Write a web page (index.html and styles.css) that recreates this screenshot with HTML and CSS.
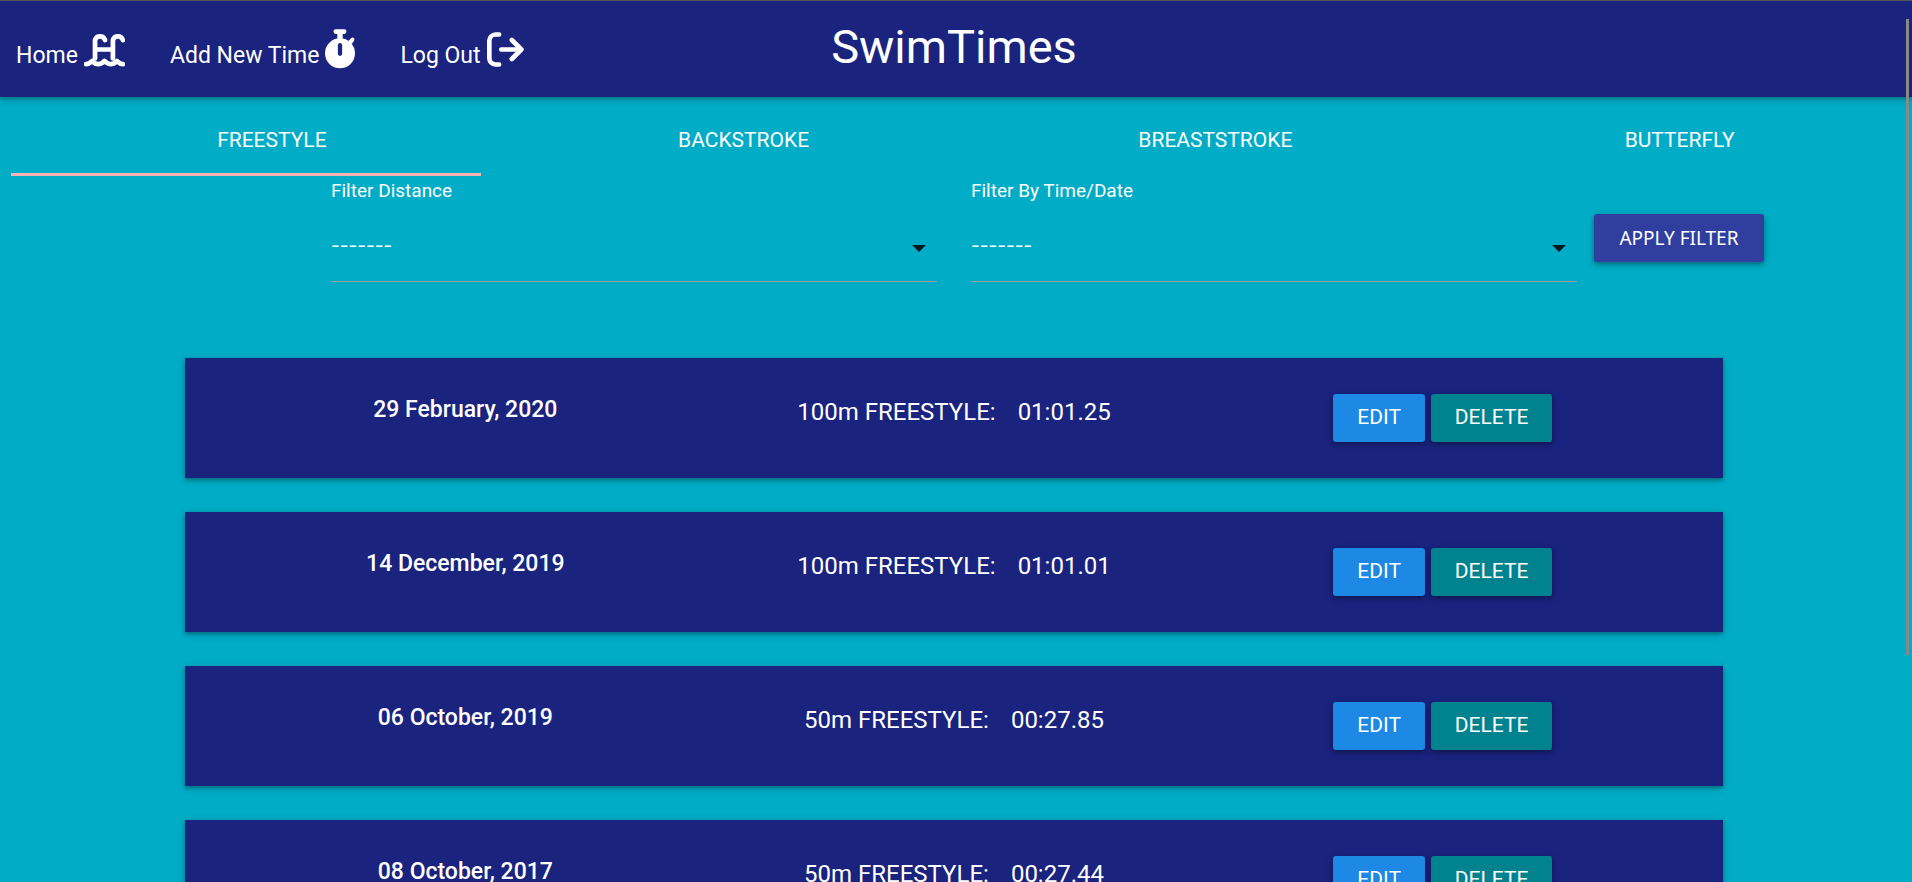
FILE: index.html
```html
<!DOCTYPE html>
<html lang="en">
<head>
<meta charset="utf-8">
<title>SwimTimes</title>
<meta name="viewport" content="width=device-width, initial-scale=1">
<link rel="stylesheet" href="styles.css">
</head>
<body>
<header class="navbar">
  <nav class="nav-links" aria-label="Main">
    <a href="#home">Home
      <svg class="icon icon-pool" viewBox="0 0 39 33" aria-hidden="true"><g fill="none" stroke="#fff" stroke-width="4.500" stroke-linecap="round" stroke-linejoin="round"><path d="M10.500 25V7.500a5 5 0 0 1 9.500 0M27.500 25V7.500a5 5 0 0 1 9.500 0M11 16.500h16"/><path d="M2 30.500c3 0 4-1.500 5.700-3 2.500 2.500 4 3 6 3s3.600-1 5.800-3c2.300 2 3.800 3 5.800 3s3.500-.5 6-3c1.700 1.500 2.700 3 5.700 3"/></g></svg>
    </a>
    <a href="#add">Add New Time
      <svg class="icon icon-watch" viewBox="0 0 28 37" aria-hidden="true"><g fill="#fff"><rect x="8" y="0" width="12" height="4.500" rx="2"/><rect x="11.500" y="2" width="5" height="7"/><circle cx="14" cy="22.500" r="14"/><path d="M21 12l3.500-3.800q1.200-1 2.400.2 1 1.200.2 2.500L24 15z"/></g><path d="M14 15v8" stroke="#1a237e" stroke-width="4" stroke-linecap="round"/></svg>
    </a>
    <a href="#logout">Log Out
      <svg class="icon icon-exit" viewBox="0 0 35 33" aria-hidden="true"><g fill="none" stroke="#fff" stroke-width="4.400" stroke-linecap="round" stroke-linejoin="round"><path d="M11.500 2.300H8A6 6 0 0 0 2.200 8v17A6 6 0 0 0 8 30.700h3.500M13.500 16.500h18M23.500 7.500l9 9-9 9"/></g></svg>
    </a>
  </nav>
  <h1 class="brand">SwimTimes</h1>
</header>

<nav class="tabs" aria-label="Strokes">
  <a class="active" href="#freestyle">FREESTYLE</a>
  <a href="#backstroke">BACKSTROKE</a>
  <a href="#breaststroke">BREASTSTROKE</a>
  <a href="#butterfly">BUTTERFLY</a>
  <span class="indicator"></span>
</nav>

<main>
  <form class="filters">
    <div class="field">
      <label for="distance">Filter Distance</label>
      <div class="select"><select id="distance"><option>-------</option></select></div>
    </div>
    <div class="field">
      <label for="order">Filter By Time/Date</label>
      <div class="select"><select id="order"><option>-------</option></select></div>
    </div>
    <button class="btn apply" type="button">APPLY FILTER</button>
  </form>

  <section class="times" aria-label="Freestyle times">
    <article class="card">
      <h2>29 February, 2020</h2>
      <p><span>100m FREESTYLE:</span><span>01:01.25</span></p>
      <div class="actions"><button class="btn edit" type="button">EDIT</button><button class="btn delete" type="button">DELETE</button></div>
    </article>
    <article class="card">
      <h2>14 December, 2019</h2>
      <p><span>100m FREESTYLE:</span><span>01:01.01</span></p>
      <div class="actions"><button class="btn edit" type="button">EDIT</button><button class="btn delete" type="button">DELETE</button></div>
    </article>
    <article class="card">
      <h2>06 October, 2019</h2>
      <p><span>50m FREESTYLE:</span><span>00:27.85</span></p>
      <div class="actions"><button class="btn edit" type="button">EDIT</button><button class="btn delete" type="button">DELETE</button></div>
    </article>
    <article class="card">
      <h2>08 October, 2017</h2>
      <p><span>50m FREESTYLE:</span><span>00:27.44</span></p>
      <div class="actions"><button class="btn edit" type="button">EDIT</button><button class="btn delete" type="button">DELETE</button></div>
    </article>
  </section>
</main>
<div class="scroll-thumb" aria-hidden="true"></div>
</body>
</html>
```

FILE: styles.css
```css
* { box-sizing: border-box; }

html { scrollbar-width: none; }

body {
  margin: 0;
  background: #00acc6;
  color: #fff;
  font-family: Roboto, "Open Sans", sans-serif;
}

a { color: inherit; text-decoration: none; }

.navbar {
  display: grid;
  grid-template-columns: 1fr auto 1fr;
  height: 97px;
  padding: 0 20px 0 16px;
  border-top: 1px solid #555;
  background: #1a237e;
  box-shadow: 0 2px 4px 0 rgba(0, 0, 0, 0.26), 0 2px 8px 0 rgba(0, 0, 0, 0.14);
}

.nav-links {
  display: flex;
  gap: 45px;
  align-items: flex-start;
  padding-top: 30px;
  font-size: 23px;
  line-height: 32px;
}

.nav-links a {
  display: flex;
  gap: 6px;
  align-items: flex-end;
  height: 41px;
  white-space: nowrap;
}

.icon { display: block; height: 35px; margin-bottom: 5px; }
.icon-pool { width: 41px; }
.icon-watch { width: 30px; height: 40px; margin-bottom: 3px; }
.icon-exit { width: 37px; }

.brand {
  margin: 0;
  padding-top: 16px;
  font-size: 47px;
  font-weight: 400;
  line-height: 60px;
}

.tabs {
  position: relative;
  display: grid;
  grid-template-columns: 472fr 472fr 472fr 457fr;
  height: 79px;
  padding: 13px 4px 0 36px;
  font-size: 21px;
  line-height: 60px;
  text-align: center;
}

.indicator {
  position: absolute;
  left: 11px;
  bottom: 0;
  width: 470px;
  height: 3px;
  background: #f6b2b5;
}

main { padding-right: 4px; }

.filters {
  display: grid;
  grid-template-columns: 1fr 1fr auto;
  column-gap: 34px;
  margin: 0 144px 0 331px;
}

.field { display: flex; flex-direction: column; padding-top: 2px; }

.field label { font-size: 19px; line-height: 26px; }

.select { position: relative; margin-top: 6px; border-bottom: 1px solid #9e9e9e; }

.select::after {
  content: "";
  position: absolute;
  right: 11px;
  top: 35px;
  border: 7px solid transparent;
  border-top-color: #00191c;
  border-bottom: 0;
}

.select select {
  display: block;
  width: 100%;
  height: 71px;
  padding: 0;
  border: 0;
  appearance: none;
  background: transparent;
  color: #fff;
  font: 19px Inter, sans-serif;
}

.btn {
  height: 48px;
  padding: 0 0 2px;
  border: 0;
  border-radius: 3px;
  color: #fff;
  font: 21px Roboto, sans-serif;
  box-shadow: 0 2px 4px 0 rgba(0, 0, 0, 0.3), 0 2px 8px 0 rgba(0, 0, 0, 0.14);
}

.apply { width: 170px; padding: 0; margin-top: 38px; margin-left: -17px; background: #303f9f; font: 19px "Noto Sans", sans-serif; }
.edit { width: 92px; background: #1e88e5; }
.delete { width: 121px; background: #00838f; }

.times {
  display: flex;
  flex-direction: column;
  gap: 34px;
  width: 1538px;
  max-width: 100%;
  margin: 76px auto 34px;
}

.card {
  display: grid;
  grid-template-columns: repeat(3, 1fr);
  padding: 36px;
  background: #1a237e;
  text-align: center;
  box-shadow: 0 2px 4px 0 rgba(0, 0, 0, 0.3), 0 2px 8px 0 rgba(0, 0, 0, 0.14);
}

.card h2 { margin: 0; font-size: 23px; font-weight: 500; line-height: 32px; }

.card p { display: flex; justify-content: center; gap: 22px; margin: 0; font-size: 24px; line-height: 36px; }

.actions { display: flex; justify-content: center; gap: 6px; }

.scroll-thumb {
  position: fixed;
  top: 19px;
  right: 3px;
  width: 3px;
  height: 636px;
  background: #888;
}
```
